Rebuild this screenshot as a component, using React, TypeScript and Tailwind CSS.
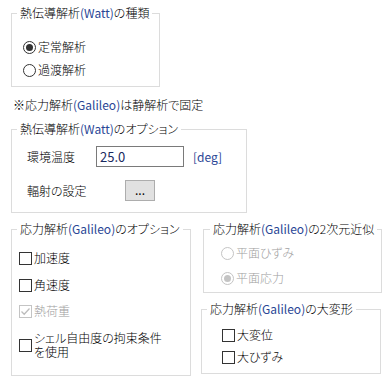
import type { ReactNode } from "react";

const font = "font-['Noto_Sans_CJK_JP','Noto_Sans',sans-serif] font-light [font-feature-settings:'palt']";

function Latin({ children }: { children: ReactNode }) {
  return <span className="text-[#2a4696] font-normal">{children}</span>;
}

function Radio({ checked, disabled, label }: { checked?: boolean; disabled?: boolean; label: string }) {
  return (
    <div className="flex items-center h-[16px]">
      <span
        className={`w-[13px] h-[13px] rounded-full border flex items-center justify-center bg-white ${
          disabled ? "border-[#c4c4c4]" : "border-[#333]"
        }`}
      >
        {checked && (
          <span className={`w-[7px] h-[7px] rounded-full ${disabled ? "bg-[#c4c4c4]" : "bg-[#333]"}`} />
        )}
      </span>
      <span className={`ml-[2px] ${disabled ? "text-[#a0a0a0]" : "text-black"}`}>{label}</span>
    </div>
  );
}

function Check({ checked, disabled, children }: { checked?: boolean; disabled?: boolean; children: ReactNode }) {
  return (
    <div className="flex items-center">
      <span
        className={`w-[13px] h-[13px] shrink-0 border bg-white flex items-center justify-center ${
          disabled ? "border-[#c4c4c4]" : "border-[#333]"
        }`}
      >
        {checked && (
          <svg width="11" height="11" viewBox="0 0 11 11">
            <path d="M1.5 5.5 L4.2 8.2 L9.5 2.5" fill="none" stroke={disabled ? "#bcbcbc" : "#333"} strokeWidth="1.3" />
          </svg>
        )}
      </span>
      <span className={`ml-[2px] leading-[14px] ${disabled ? "text-[#a0a0a0]" : "text-black"}`}>{children}</span>
    </div>
  );
}

function Group({ title, className, legendClass, children }: { title: ReactNode; className: string; legendClass: string; children: ReactNode }) {
  return (
    <fieldset className={`border border-[#dcdcdc] ${className}`}>
      <legend className={`px-[3px] h-[14px] leading-[14px] whitespace-nowrap ${legendClass}`}>{title}</legend>
      {children}
    </fieldset>
  );
}

export default function App() {
  return (
    <div className={`w-[386px] h-[381px] bg-white text-[12px] leading-[14px] text-black overflow-hidden ${font}`}>
      <div className="pt-[6px] pl-[11px]">
        {/* 種類 */}
        <Group
          className="w-[149px]"
          legendClass="ml-[5px]"
          title={<>熱伝導解析<Latin>(Watt)</Latin>の種類</>}
        >
          <div className="pt-[19px] pb-[8px] pl-[11px] flex flex-col gap-[7px]">
            <Radio checked label="定常解析" />
            <Radio label="過渡解析" />
          </div>
        </Group>

        <p className="mt-[11px] ml-[2px] h-[14px]">
          ※応力解析<Latin>(Galileo)</Latin>は静解析で固定
        </p>

        {/* オプション */}
        <Group
          className="w-[236px] mt-[10px]"
          legendClass="ml-[5px]"
          title={<>熱伝導解析<Latin>(Watt)</Latin>のオプション</>}
        >
          <div className="pt-[10px] pb-[11px] pl-[15px] flex flex-col gap-[13px]">
            <div className="flex items-center h-[21px]">
              <span className="w-[69px]">環境温度</span>
              <div className="w-[88px] h-[21px] border border-[#7a7a7a] flex items-center pl-[3px] text-[#1a2a60] text-[13px] font-normal">
                25.0
              </div>
              <span className="ml-[9px] text-[#2a4696] text-[12px] font-normal">[deg]</span>
            </div>
            <div className="flex items-center h-[21px]">
              <span className="w-[98px]">輻射の設定</span>
              <button className="w-[30px] h-[21px] bg-[#e1e1e1] border border-[#adadad] text-black text-[12px] font-normal leading-[10px] pb-[2px]">
                ...
              </button>
            </div>
          </div>
        </Group>

        <div className="flex mt-[9px] items-start">
          {/* 応力オプション */}
          <Group
            className="w-[180px]"
            legendClass="ml-[5px]"
            title={<>応力解析<Latin>(Galileo)</Latin>のオプション</>}
          >
            <div className="pt-[14px] pb-[16px] pl-[7px] flex flex-col">
              <div className="h-[16px] flex items-center"><Check>加速度</Check></div>
              <div className="h-[16px] flex items-center mt-[11px]"><Check>角速度</Check></div>
              <div className="h-[16px] flex items-center mt-[10px]"><Check checked disabled>熱荷重</Check></div>
              <div className="mt-[12px]">
                <Check>シェル自由度の拘束条件<br />を使用</Check>
              </div>
            </div>
          </Group>

          <div className="ml-[10px] flex flex-col">
            <Group
              className="w-[179px] ml-[2px]"
              legendClass="ml-[6px]"
              title={<>応力解析<Latin>(Galileo)</Latin>の2次元近似</>}
            >
              <div className="pt-[9px] pb-[6px] pl-[17px] flex flex-col gap-[9px]">
                <Radio disabled label="平面ひずみ" />
                <Radio disabled checked label="平面応力" />
              </div>
            </Group>

            <Group
              className="w-[180px] mt-[9px]"
              legendClass="ml-[5px]"
              title={<>応力解析<Latin>(Galileo)</Latin>の大変形</>}
            >
              <div className="pt-[11px] pb-[8px] pl-[20px] flex flex-col gap-[6px]">
                <div className="h-[16px] flex items-center"><Check>大変位</Check></div>
                <div className="h-[16px] flex items-center"><Check>大ひずみ</Check></div>
              </div>
            </Group>
          </div>
        </div>
      </div>
    </div>
  );
}
